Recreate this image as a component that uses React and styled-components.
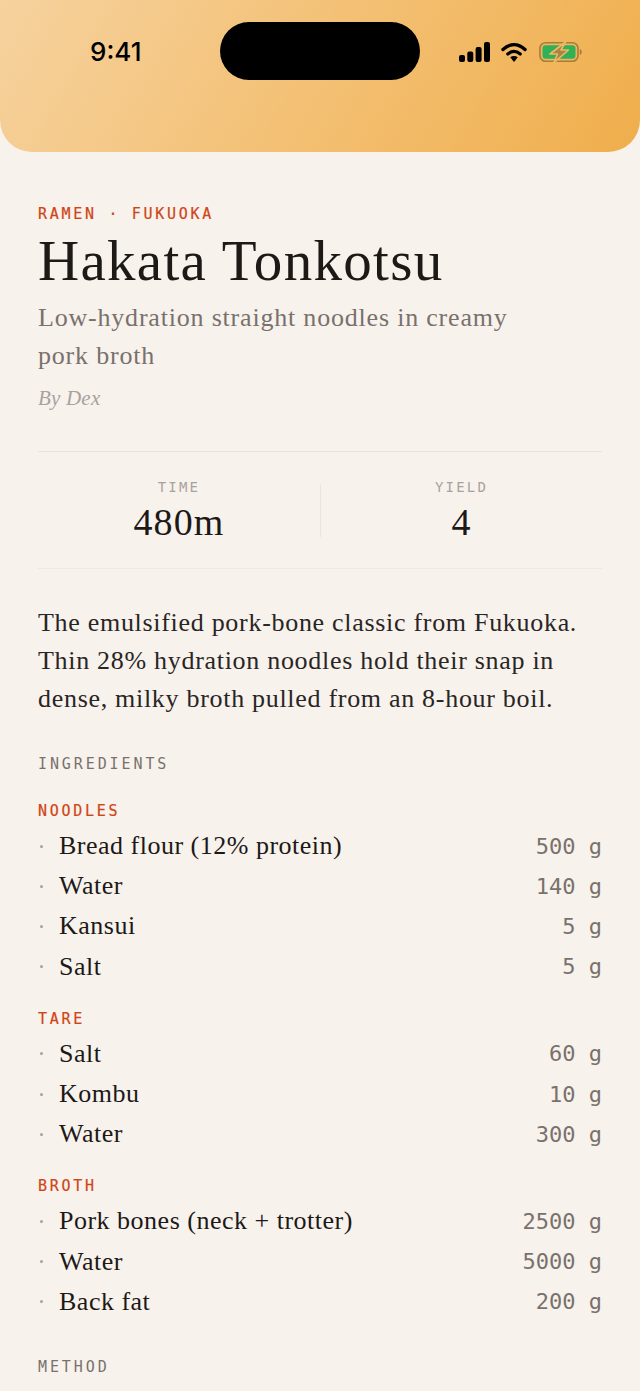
import React from 'react';
import styled, { createGlobalStyle } from 'styled-components';

const serif = '"Liberation Serif", "Times New Roman", serif';
const mono = '"DejaVu Sans Mono", "Liberation Mono", monospace';

const Global = createGlobalStyle`
    html, body {
        margin: 0;
        height: 1391px;
        overflow: hidden;
        background: #f8f2ed;
    }
`;

const Page = styled.main`
    width: 640px;
    height: 1391px;
    overflow: hidden;
    background: #f8f2ed;
    color: #1c1917;
    font-family: ${serif};
`;

const Hero = styled.header`
    height: 152px;
    box-sizing: border-box;
    padding: 22px 56px 0 90px;
    display: flex;
    align-items: flex-start;
    background: linear-gradient(120deg, #f6d29e 0%, #f3c074 50%, #f0ae4c 100%);
    border-radius: 0 0 32px 32px;
`;

const Clock = styled.div`
    width: 130px;
    margin-top: 15px;
    font-family: Inter, "Liberation Sans", sans-serif;
    font-size: 26px;
    line-height: 30px;
    font-weight: 500;
    color: #000;
`;

const Island = styled.div`
    width: 200px;
    height: 58px;
    border-radius: 29px;
    background: #000;
`;

const StatusIcons = styled.div`
    display: flex;
    align-items: center;
    gap: 11px;
    margin: 19px 0 0 39px;
    height: 22px;
`;

const Content = styled.div`
    padding: 52px 38px 0;
`;

const Eyebrow = styled.div`
    font-family: ${mono};
    font-size: 15px;
    line-height: 20px;
    letter-spacing: 2.7px;
    color: #cf4516;
    -webkit-text-stroke: 0.2px #cf4516;
`;

const Title = styled.h1`
    margin: 6px 0 0;
    font-size: 57px;
    line-height: 62px;
    font-weight: 400;
    letter-spacing: 1.3px;
`;

const Subtitle = styled.p`
    margin: 7px 0 0;
    width: 500px;
    font-size: 26px;
    line-height: 38px;
    letter-spacing: 0.8px;
    color: #78716c;
`;

const Byline = styled.div`
    margin-top: 9px;
    font-size: 21px;
    line-height: 28px;
    letter-spacing: 0.2px;
    font-style: italic;
    color: #a8a29e;
`;

const Stats = styled.section`
    margin-top: 39px;
    height: 118px;
    box-sizing: border-box;
    padding-top: 30px;
    display: grid;
    grid-template-columns: 1fr 1fr;
    border-top: 1px solid #e9e3dd;
    border-bottom: 1px solid #f0e9e3;
`;

const Stat = styled.div`
    height: 53px;
    margin-top: 2px;
    display: flex;
    flex-direction: column;
    align-items: center;
    border-left: ${(p) => (p.$divided ? '1px solid #ebe5df' : 'none')};
`;

const StatLabel = styled.div`
    margin-top: -2px;
    font-family: ${mono};
    font-size: 14px;
    line-height: 10px;
    letter-spacing: 2.2px;
    color: #a8a29e;
`;

const StatValue = styled.div`
    margin-top: 10px;
    font-size: 38px;
    line-height: 40px;
    letter-spacing: 1.1px;
`;

const Intro = styled.p`
    margin: 35px 0 0;
    font-size: 26px;
    line-height: 38px;
    letter-spacing: 0.7px;
    color: #292524;
`;

const SectionHead = styled.h2`
    margin: ${(p) => p.$top}px 0 0;
    font-family: ${mono};
    font-size: 15px;
    line-height: 20px;
    font-weight: 400;
    letter-spacing: 2.9px;
    color: #78716c;
`;

const GroupHead = styled.h3`
    margin: ${(p) => p.$top}px 0 0;
    font-family: ${mono};
    font-size: 15px;
    line-height: 20px;
    font-weight: 400;
    letter-spacing: 2.7px;
    color: #cf4516;
    -webkit-text-stroke: 0.2px #cf4516;
`;

const List = styled.ul`
    list-style: none;
    margin: 5px 0 0;
    padding: 0;
`;

const Row = styled.li`
    height: 40.2px;
    display: flex;
    align-items: center;
`;

const Dot = styled.span`
    width: 3px;
    height: 3px;
    margin: 0 16px 0 2px;
    border-radius: 50%;
    background: #a8a29e;
`;

const Name = styled.span`
    flex: 1;
    font-size: 26px;
    letter-spacing: 0.5px;
    color: #1c1917;
`;

const Qty = styled.span`
    font-family: ${mono};
    font-size: 22px;
    color: #78716c;
    white-space: pre;
`;

const groups = [
    {
        name: 'NOODLES',
        top: 27,
        items: [
            ['Bread flour (12% protein)', '500 g'],
            ['Water', '140 g'],
            ['Kansui', '5 g'],
            ['Salt', '5 g'],
        ],
    },
    {
        name: 'TARE',
        top: 22,
        items: [
            ['Salt', '60 g'],
            ['Kombu', '10 g'],
            ['Water', '300 g'],
        ],
    },
    {
        name: 'BROTH',
        top: 22,
        items: [
            ['Pork bones (neck + trotter)', '2500 g'],
            ['Water', '5000 g'],
            ['Back fat', '200 g'],
        ],
    },
];

function StatusGlyphs() {
    return (
        <StatusIcons>
            <svg width="31" height="20" viewBox="0 0 31 20">
                <rect x="0" y="13" width="6" height="7" rx="2" fill="#000" />
                <rect x="8.300" y="9.500" width="6" height="10.500" rx="2" fill="#000" />
                <rect x="16.600" y="5" width="6" height="15" rx="2" fill="#000" />
                <rect x="25" y="0" width="6" height="20" rx="2" fill="#000" />
            </svg>
            <svg width="26" height="20" viewBox="0 0 26 20">
                <path d="M2 7.500C9 1 17 1 24 7.500" fill="none" stroke="#000" strokeWidth="3.400" strokeLinecap="round" />
                <path d="M6.800 12C10.800 8.600 15.200 8.600 19.200 12" fill="none" stroke="#000" strokeWidth="3.200" strokeLinecap="round" />
                <path d="M9.200 15.200C11.400 13.600 14.600 13.600 16.800 15.200L13 20Z" fill="#000" />
            </svg>
            <svg width="44" height="22" viewBox="0 0 44 22">
                <rect x="2" y="1.800" width="38" height="18.400" rx="5.500" fill="none" stroke="#a67c3f" strokeWidth="1.600" />
                <rect x="4.500" y="4.300" width="33" height="13.400" rx="3" fill="#2fb158" />
                <path d="M41.800 8v6c1.300-.5 2-1.600 2-3s-.7-2.500-2-3Z" fill="#a67c3f" />
                <path d="M27.500 1 12 13H19.500L16 21.500 30.500 9H23Z" fill="#ac8343" stroke="#efb964" strokeWidth="1.600" strokeLinejoin="round" />
            </svg>
        </StatusIcons>
    );
}

export default function App() {
    return (
        <Page>
            <Global />
            <Hero>
                <Clock>9:41</Clock>
                <Island />
                <StatusGlyphs />
            </Hero>
            <Content>
                <Eyebrow>RAMEN · FUKUOKA</Eyebrow>
                <Title>Hakata Tonkotsu</Title>
                <Subtitle>Low-hydration straight noodles in creamy pork broth</Subtitle>
                <Byline>By Dex</Byline>
                <Stats>
                    <Stat>
                        <StatLabel>TIME</StatLabel>
                        <StatValue>480m</StatValue>
                    </Stat>
                    <Stat $divided>
                        <StatLabel>YIELD</StatLabel>
                        <StatValue>4</StatValue>
                    </Stat>
                </Stats>
                <Intro>
                    The emulsified pork-bone classic from Fukuoka. Thin 28% hydration noodles hold their snap in
                    dense, milky broth pulled from an 8-hour boil.
                </Intro>
                <SectionHead $top={36}>INGREDIENTS</SectionHead>
                {groups.map((group) => (
                    <div key={group.name}>
                        <GroupHead $top={group.top}>{group.name}</GroupHead>
                        <List>
                            {group.items.map(([name, qty]) => (
                                <Row key={name}>
                                    <Dot />
                                    <Name>{name}</Name>
                                    <Qty>{qty}</Qty>
                                </Row>
                            ))}
                        </List>
                    </div>
                ))}
                <SectionHead $top={35}>METHOD</SectionHead>
            </Content>
        </Page>
    );
}
